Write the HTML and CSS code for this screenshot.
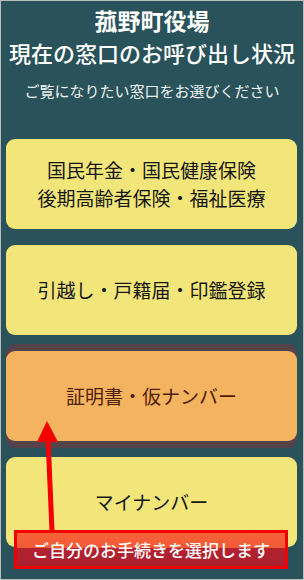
FILE: index.html
```html
<!DOCTYPE html>
<html lang="ja">
<head>
    <meta charset="UTF-8">
    <meta name="viewport" content="width=device-width, initial-scale=1.0">
    <title>菰野町役場 窓口呼び出し状況</title>
    <link rel="stylesheet" href="styles.css">
</head>
<body>
    <div class="screen">
        <header class="header">
            <h1>
                <span class="town">菰野町役場</span>
                <span class="sub">現在の窓口のお呼び出し状況</span>
            </h1>
            <p class="lead">ご覧になりたい窓口をお選びください</p>
        </header>

        <nav class="counters">
            <a class="counter">国民年金・国民健康保険<br>後期高齢者保険・福祉医療</a>
            <a class="counter">引越し・戸籍届・印鑑登録</a>
            <a class="counter active">証明書・仮ナンバー</a>
            <a class="counter">マイナンバー</a>
        </nav>

        <!-- tutorial overlay -->
        <svg class="arrow" width="304" height="580" viewBox="0 0 304 580">
            <line x1="52" y1="531" x2="48" y2="438" stroke="#f40000" stroke-width="5"/>
            <polygon points="47,421 58,442 37,442" fill="#f40000"/>
        </svg>
        <div class="callout">ご自分のお手続きを選択します</div>
    </div>
</body>
</html>
```

FILE: styles.css
```css
body {
    margin: 0;
    font-family: "Noto Sans CJK JP", "Noto Sans", sans-serif;
}

.screen {
    position: relative;
    width: 304px;
    height: 580px;
    box-sizing: border-box;
    border: 1px solid #b9bcbd;
    background: #29525a;
    overflow: hidden;
}

.header {
    padding-top: 3px;
    text-align: center;
    color: #fff;
}

h1 {
    margin: 0;
    font-size: 22px;
    line-height: 32px;
}

h1 span {
    display: block;
}

.town {
    font-size: 23px;
    font-weight: 700;
}

.sub {
    font-weight: 500;
}

.lead {
    margin: 13px 0 0;
    font-size: 15px;
    line-height: 20px;
    color: #eef3f3;
}

.counters {
    display: flex;
    flex-direction: column;
    gap: 16px;
    margin-top: 38px;
    padding: 0 6px 0 5px;
}

.counter {
    display: flex;
    align-items: center;
    justify-content: center;
    height: 90px;
    border-radius: 9px;
    background: #f2e67a;
    color: #161616;
    font-size: 19px;
    font-weight: 400;
    line-height: 28px;
    text-align: center;
    cursor: pointer;
}

.counter.active {
    background: #f4b35e;
    color: #4e200c;
    box-shadow: 0 -7px 0 #54434b, 0 7px 0 #54434b;
}

.arrow {
    position: absolute;
    top: -1px;
    left: -1px;
}

.callout {
    position: absolute;
    left: 13px;
    top: 529px;
    width: 274px;
    height: 39px;
    box-sizing: border-box;
    border: 3px solid #f10000;
    background: linear-gradient(to bottom, #f76338 0%, #f05a36 44%, #b3222f 44%, #ab2030 100%);
    color: #fff;
    font-size: 17px;
    line-height: 33px;
    text-align: center;
    font-weight: 500;
}
```
